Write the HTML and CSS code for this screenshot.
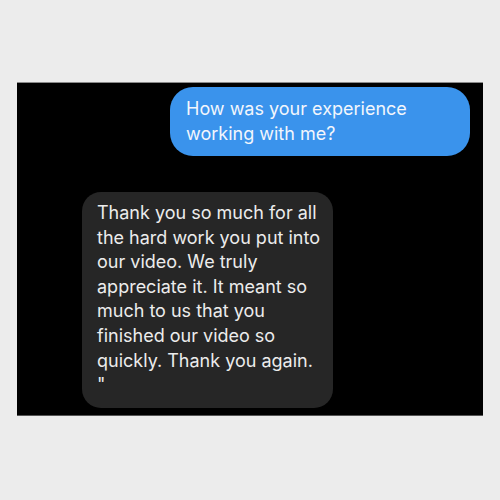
FILE: index.html
```html
<!DOCTYPE html>
<html>
<head>
<meta charset="utf-8">
<link rel="stylesheet" href="styles.css">
</head>
<body>
<div class="panel">
  <div class="row row-out">
    <div class="bubble out">How was your experience<br>working with me?</div>
  </div>
  <div class="row row-in">
    <div class="bubble in">Thank you so much for all<br>the hard work you put into<br>our video. We truly<br>appreciate it. It meant so<br>much to us that you<br>finished our video so<br>quickly. Thank you again.<br>"</div>
  </div>
</div>
</body>
</html>
```

FILE: styles.css
```css
html, body {
  margin: 0;
  padding: 0;
  background: #ececec;
  width: 500px;
  height: 500px;
}
.panel {
  margin: 82px 0 0 17px;
  width: 466px;
  height: 332px;
  background: #000;
  border-top: 1px solid #8a8a8a;
  border-bottom: 1px solid #555;
  display: flex;
  flex-direction: column;
  font-family: Inter, "Liberation Sans", Arial, sans-serif;
  font-size: 18px;
}
.row {
  display: flex;
}
.row-out {
  justify-content: flex-end;
  padding: 4px 13px 0 0;
}
.row-in {
  padding: 36px 0 0 65px;
}
.bubble {
  box-sizing: border-box;
  white-space: nowrap;
}
.out {
  width: 300px;
  height: 69px;
  background: #3a93ec;
  color: #f2f6fc;
  border-radius: 23px;
  padding: 9px 0 0 16px;
  line-height: 25px;
}
.in {
  width: 251px;
  height: 216px;
  background: #262626;
  color: #ececec;
  border-radius: 19px;
  padding: 9px 0 0 15px;
  line-height: 24.6px;
}
```
